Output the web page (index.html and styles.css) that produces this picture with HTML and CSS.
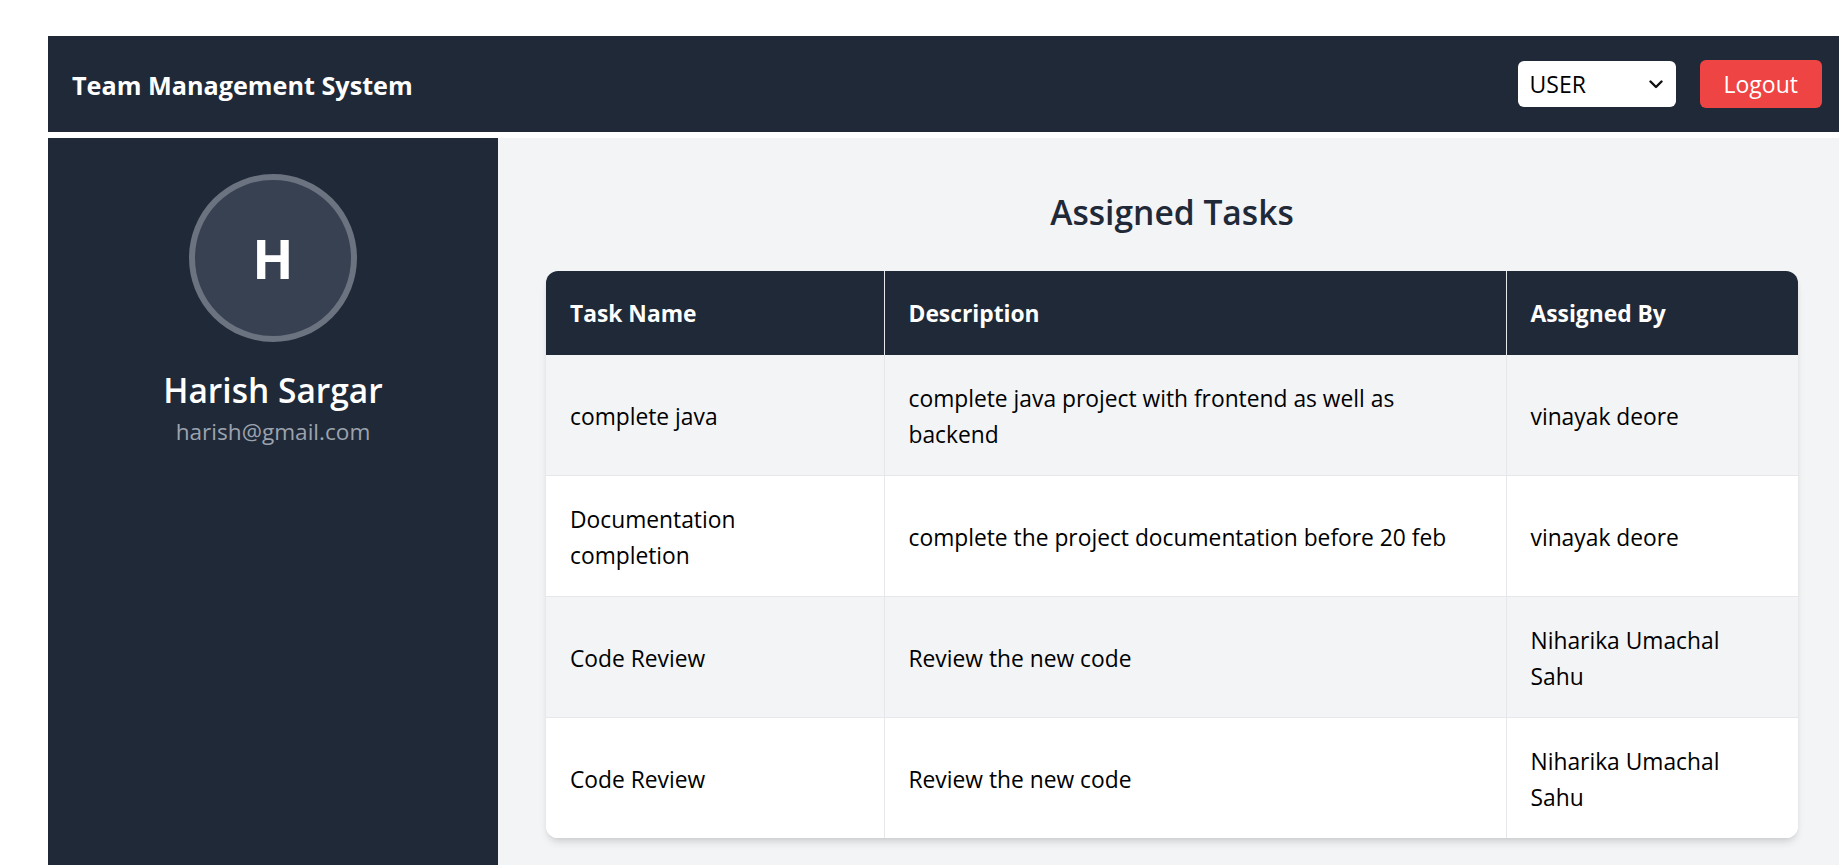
FILE: index.html
```html
<!DOCTYPE html>
<html lang="en">
<head>
<meta charset="utf-8">
<title>Team Management System</title>
<link rel="stylesheet" href="styles.css">
</head>
<body>
<div class="page">
  <header class="navbar">
    <h1 class="brand">Team Management System</h1>
    <div class="nav-actions">
      <div class="select-wrap">
        <select class="role-select">
          <option>USER</option>
          <option>ADMIN</option>
        </select>
        <svg class="chevron" width="14" height="9" viewBox="0 0 14 9" aria-hidden="true"><path d="M1.5 1.5 L7 7 L12.5 1.5" fill="none" stroke="#111" stroke-width="2.4" stroke-linecap="round" stroke-linejoin="round"/></svg>
      </div>
      <button class="logout">Logout</button>
    </div>
  </header>
  <div class="layout">
    <aside class="sidebar">
      <div class="avatar">H</div>
      <h2 class="user-name">Harish Sargar</h2>
      <p class="user-email">harish@gmail.com</p>
    </aside>
    <main class="content">
      <h2 class="section-title">Assigned Tasks</h2>
      <div class="table-card">
        <table class="tasks">
          <colgroup>
            <col class="c1"><col class="c2"><col class="c3">
          </colgroup>
          <thead>
            <tr><th>Task Name</th><th>Description</th><th>Assigned By</th></tr>
          </thead>
          <tbody>
            <tr><td>complete java</td><td>complete java project with frontend as well as backend</td><td>vinayak deore</td></tr>
            <tr><td>Documentation completion</td><td>complete the project documentation before 20 feb</td><td>vinayak deore</td></tr>
            <tr><td>Code Review</td><td>Review the new code</td><td>Niharika Umachal Sahu</td></tr>
            <tr><td>Code Review</td><td>Review the new code</td><td>Niharika Umachal Sahu</td></tr>
          </tbody>
        </table>
      </div>
    </main>
  </div>
</div>
</body>
</html>
```

FILE: styles.css
```css
html, body {
  margin: 0;
  padding: 0;
  overflow: hidden;
  background: #ffffff;
}
body {
  font-family: "Open Sans", "Noto Sans", sans-serif;
  color: #111111;
}
.page {
  width: 1798px;
  margin: 36px 0 0 48px;
}
.navbar {
  height: 96px;
  box-sizing: border-box;
  background: #1f2937;
  display: flex;
  align-items: center;
  justify-content: space-between;
  padding: 0 24px;
}
.brand {
  margin: 0;
  padding-top: 2px;
  color: #ffffff;
  font-size: 25.2px;
  font-weight: 700;
  line-height: 36px;
}
.nav-actions {
  display: flex;
  align-items: center;
  gap: 24px;
}
.select-wrap {
  position: relative;
  width: 158px;
  height: 46px;
}
.role-select {
  appearance: none;
  -webkit-appearance: none;
  width: 158px;
  height: 46px;
  border: none;
  border-radius: 6px;
  background: #ffffff;
  color: #000000;
  font-family: inherit;
  font-size: 23px;
  padding: 0 12px;
  margin: 0;
}
.chevron {
  position: absolute;
  right: 13px;
  top: 19px;
  pointer-events: none;
}
.logout {
  height: 48px;
  padding: 0 24px;
  border: none;
  border-radius: 6px;
  background: #ef4444;
  color: #ffffff;
  font-family: inherit;
  font-size: 23px;
  line-height: 36px;
}
.layout {
  display: flex;
  margin-top: 6px;
  min-height: 727px;
}
.sidebar {
  width: 450px;
  flex: none;
  background: #1f2937;
  padding: 36px 0;
  box-sizing: border-box;
  display: flex;
  flex-direction: column;
  align-items: center;
}
.avatar {
  width: 168px;
  height: 168px;
  box-sizing: border-box;
  border-radius: 50%;
  border: 6px solid #6b7280;
  background: #374151;
  color: #ffffff;
  font-size: 54px;
  font-weight: 700;
  display: flex;
  align-items: center;
  justify-content: center;
}
.user-name {
  margin: 24px 0 0;
  color: #ffffff;
  font-size: 33.5px;
  font-weight: 600;
  line-height: 48px;
}
.user-email {
  margin: 0;
  color: #9ca3af;
  font-size: 22.6px;
  line-height: 36px;
}
.content {
  flex: 1;
  background: #f3f4f6;
  padding: 48px;
}
.section-title {
  margin: 0 0 37px;
  padding-top: 2px;
  height: 46px;
  text-align: center;
  color: #1f2937;
  font-size: 33.6px;
  font-weight: 600;
  line-height: 48px;
}
.table-card {
  border-radius: 12px;
  overflow: hidden;
  background: #ffffff;
  box-shadow: 0 6px 9px -2px rgba(0,0,0,0.12), 0 3px 6px -3px rgba(0,0,0,0.1);
}
.tasks {
  width: 100%;
  table-layout: fixed;
  border-collapse: collapse;
  font-size: 22.8px;
  line-height: 36px;
}
.c1 { width: 338px; }
.c2 { width: 622px; }
.c3 { width: 292px; }
.tasks th {
  background: #1f2937;
  color: #ffffff;
  font-weight: 700;
  text-align: left;
  padding: 25px 24px 23px;
}
.tasks td {
  padding: 26px 24px 22px;
  color: #000000;
  vertical-align: middle;
}
.tasks th + th,
.tasks td + td {
  border-left: 1px solid #e5e7eb;
}
.tasks tbody tr + tr td {
  border-top: 1px solid #e5e7eb;
}
.tasks tbody tr:nth-child(odd) {
  background: #f3f4f6;
}
.tasks tbody tr:nth-child(even) {
  background: #ffffff;
}
```
